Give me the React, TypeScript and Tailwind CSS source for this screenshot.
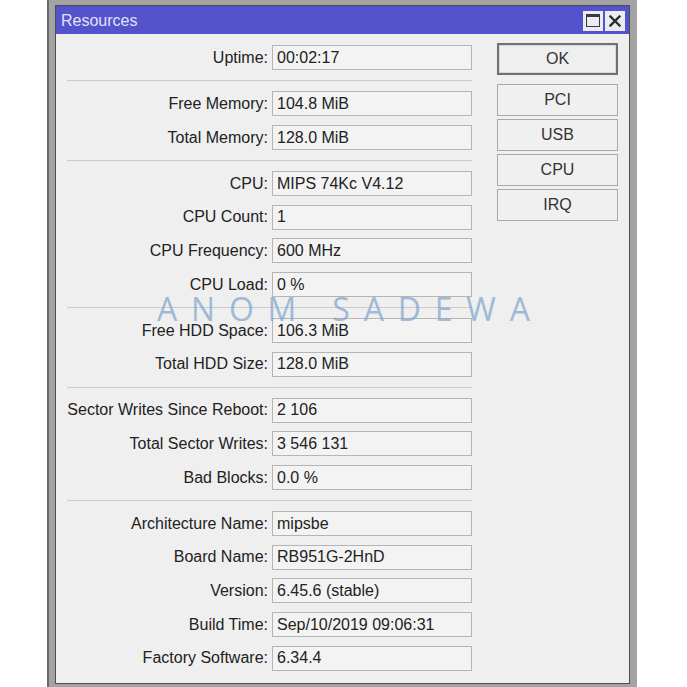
import React from "react"

type Row = { label: string; value: string }

const groups: Row[][] = [
    [{ label: "Uptime", value: "00:02:17" }],
    [
        { label: "Free Memory", value: "104.8 MiB" },
        { label: "Total Memory", value: "128.0 MiB" },
    ],
    [
        { label: "CPU", value: "MIPS 74Kc V4.12" },
        { label: "CPU Count", value: "1" },
        { label: "CPU Frequency", value: "600 MHz" },
        { label: "CPU Load", value: "0 %" },
    ],
    [
        { label: "Free HDD Space", value: "106.3 MiB" },
        { label: "Total HDD Size", value: "128.0 MiB" },
    ],
    [
        { label: "Sector Writes Since Reboot", value: "2 106" },
        { label: "Total Sector Writes", value: "3 546 131" },
        { label: "Bad Blocks", value: "0.0 %" },
    ],
    [
        { label: "Architecture Name", value: "mipsbe" },
        { label: "Board Name", value: "RB951G-2HnD" },
        { label: "Version", value: "6.45.6 (stable)" },
        { label: "Build Time", value: "Sep/10/2019 09:06:31" },
        { label: "Factory Software", value: "6.34.4" },
    ],
]

const buttons = ["PCI", "USB", "CPU", "IRQ"]

function Field({ label, value }: Row) {
    return (
        <div className="flex h-[33.7px] items-center">
            <div className="w-[201px] shrink-0 text-right whitespace-nowrap">{label}:</div>
            <div className="ml-[4px] flex h-[25px] w-[200px] items-center border border-[#b5b5b5] bg-[#f3f3f3] pl-[4px] whitespace-nowrap">
                {value}
            </div>
        </div>
    )
}

export default function App() {
    return (
        <div className="h-[687px] w-[687px] overflow-hidden bg-white" style={{ fontFamily: '"Liberation Sans", Arial, sans-serif' }}>
            {/* outer frame of the screen */}
            <div className="ml-[47px] h-[687px] w-[590px] border-l-2 border-[#6a6a6a] bg-[#a3a3a3] pt-[5px] pl-[6px] pr-[7px]">
                <div className="flex h-[679px] flex-col border border-[#4d4d4d] bg-[#efefef]">
                    {/* title bar */}
                    <div className="flex h-[28px] shrink-0 items-center bg-[#5353cb] pt-[1px] pl-[5px] pr-[4px]">
                        <span className="text-[16px] text-[#e2e2f8]">Resources</span>
                        <div className="ml-auto flex gap-[2px]">
                            <div className="flex h-[20px] w-[20px] items-center justify-center bg-[#ebebf2]">
                                <div className="h-[13px] w-[14px] border-[1.5px] border-t-[3px] border-[#3a3a3a]" />
                            </div>
                            <div className="flex h-[20px] w-[20px] items-center justify-center bg-[#ebebf2]">
                                <svg width="12" height="12" viewBox="0 0 12 12">
                                    <path d="M1.5 1.5 L10.5 10.5 M10.5 1.5 L1.5 10.5" stroke="#2d2d2d" strokeWidth="2.4" strokeLinecap="square" />
                                </svg>
                            </div>
                        </div>
                    </div>

                    {/* body */}
                    <div className="relative flex flex-1 text-[16px] text-[#222]">
                        <div className="pt-[7px] pl-[11px]">
                            {groups.map((g, gi) => (
                                <div key={gi}>
                                    {gi > 0 && (
                                        <div className="flex h-[12.3px] items-center">
                                            <div className="h-px w-[405px] bg-[#cbcbcb]" />
                                        </div>
                                    )}
                                    {g.map((r) => (
                                        <Field key={r.label} label={r.label} value={r.value} />
                                    ))}
                                </div>
                            ))}
                        </div>

                        <div className="ml-[25px] flex flex-col gap-[3px] pt-[9px]">
                            <div className="flex h-[32px] w-[121px] items-center justify-center border-2 border-[#707070] bg-[#efefef] text-[#333] shadow-[inset_0_0_0_1px_#d8d8d8]">
                                OK
                            </div>
                            <div className="h-[3px]" />
                            {buttons.map((b) => (
                                <div key={b} className="flex h-[32px] w-[121px] items-center justify-center border border-[#a8a8a8] bg-[#f0f0f0] text-[#333]">
                                    {b}
                                </div>
                            ))}
                        </div>

                        {/* watermark */}
                        <div
                            className="pointer-events-none absolute top-[251px] left-[101px] text-[32px] tracking-[13.8px] whitespace-nowrap text-[#7ea5cc] opacity-70"
                            style={{ fontFamily: '"Open Sans", "Liberation Sans", sans-serif' }}
                        >
                            ANOM SADEWA
                        </div>
                    </div>
                </div>
            </div>
        </div>
    )
}
